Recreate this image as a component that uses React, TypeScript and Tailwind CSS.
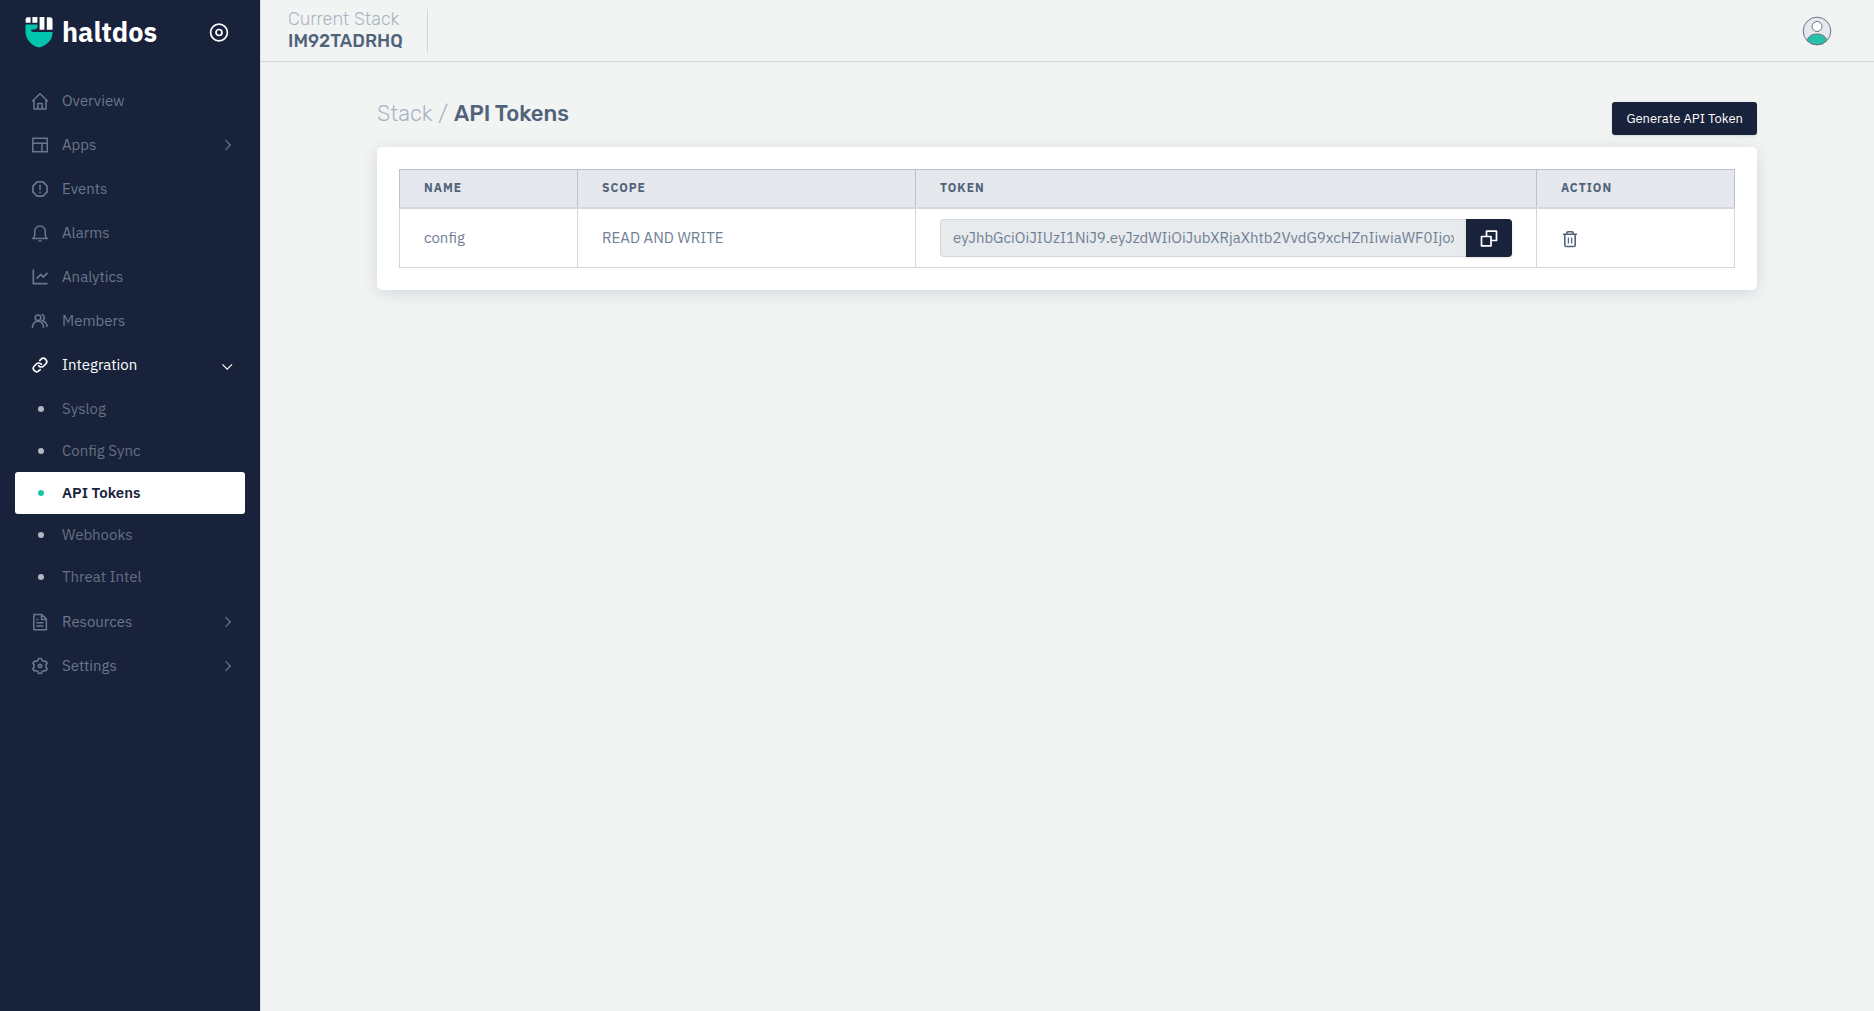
import React, { useState } from 'react';
import { Link } from 'lucide-react';
import { RiLineChartLine, RiSettings3Line, RiSpam2Line } from 'react-icons/ri';

interface NavItem {
  label: string;
  icon: React.ReactNode;
  children?: string[];
}

interface ApiToken {
  name: string;
  scope: string;
  token: string;
}

const HomeIcon = () => (
  <svg className="w-5 h-5" viewBox="0 0 20 20" fill="none" stroke="currentColor" strokeWidth="1.5" strokeLinejoin="round" strokeLinecap="round">
    <path d="M2.5 10 10 2.8l7.5 7.2M4 9v9h12V9M7.8 18v-5.5h4.4V18" />
  </svg>
);

const AppsIcon = () => (
  <svg className="w-5 h-5" viewBox="0 0 20 20" fill="none" stroke="currentColor" strokeWidth="1.5" strokeLinejoin="round">
    <path d="M2.8 3.3h14.5v13.4H2.8zM2.8 8.2h14.5M11.9 8.2v8.5" />
  </svg>
);

const BellIcon = () => (
  <svg className="w-5 h-5" viewBox="0 0 20 20" fill="none" stroke="currentColor" strokeWidth="1.5" strokeLinejoin="round" strokeLinecap="round">
    <path d="M2.8 15.5c1.2-.8 1.9-1.8 1.9-3.5V8.3a5.3 5.3 0 0 1 10.6 0V12c0 1.7.7 2.7 1.9 3.5zM9 18h2" />
  </svg>
);

const MembersIcon = () => (
  <svg className="w-5 h-5" viewBox="0 0 20 20" fill="none" stroke="currentColor" strokeWidth="1.6" strokeLinecap="round">
    <circle cx="8" cy="6.8" r="2.8" />
    <path d="M2.5 16.5v-.7a5.5 5.5 0 0 1 11 0v.7M12.2 3.5c2.7 1 2.7 5 .3 6.2 2.7.9 4.4 3 4.6 5.8" />
  </svg>
);

const FileIcon = () => (
  <svg className="w-5 h-5" viewBox="0 0 20 20" fill="none" stroke="currentColor" strokeWidth="1.5" strokeLinejoin="round">
    <path d="M3.8 2.5h8l4.6 4.6v10.6H3.8zM11.5 2.5v4.9h4.9M6.5 7.5h2M6.5 10.8h7M6.5 14h7" />
  </svg>
);

const CopyIcon = () => (
  <svg className="w-5 h-5" viewBox="0 0 20 20" fill="none" stroke="currentColor" strokeWidth="1.7" strokeLinejoin="round">
    <path d="M2.5 8.5H12v9.3H2.5zM7.5 8.5V3.2h10v9.3H12" />
  </svg>
);

const TrashIcon = () => (
  <svg className="w-[18px] h-[18px]" viewBox="0 0 18 18" fill="none" stroke="currentColor" strokeWidth="1.6" strokeLinejoin="round">
    <path d="M2 4.3h14M3.8 4.3v10.9q0 1.3 1.3 1.3h7.8q1.3 0 1.3-1.3V4.3M5.8 4.3V3q0-1.200 1.200-1.200h4q1.200 0 1.200 1.200v1.300" />
    <path d="M7.4 7.5v6M10.6 7.5v6" strokeWidth="1.3" />
  </svg>
);

const Logo = () => (
  <svg className="w-7 h-[31px]" viewBox="0 0 28 31">
    <path fill="#fff" d="M2.5.3H5.6v5.4H.8l-.3-3.2Q.6.3 2.5.3zM7.4.1h5v5.6h-5zM14.6.1h4.8v12.6h-4.8zM21.8.3h3.2Q27.5.4 27.5 3v9.7h-5.7z" />
    <path fill="#00c4ab" d="M.5 7.6h12v2q0 3-3.5 3H6.2v1.7q.8.7 2 .7h19.3v.8c0 7.5-6 13-13.5 14.7C6.5 28.8.5 22.3.5 15z" />
  </svg>
);

const ChevronIcon = ({ open }: { open: boolean }) => (
  <svg className="w-3 h-3" viewBox="0 0 12 12" fill="none" stroke="currentColor" strokeWidth="1.2">
    {open ? <path d="M.4 5.4l4.8 4.8L10 5.4" /> : <path d="M3.5 1.2 8.3 6l-4.8 4.8" />}
  </svg>
);

const navItems: NavItem[] = [
  { label: 'Overview', icon: <HomeIcon /> },
  { label: 'Apps', icon: <AppsIcon />, children: [] },
  { label: 'Events', icon: <RiSpam2Line size={20} /> },
  { label: 'Alarms', icon: <BellIcon /> },
  { label: 'Analytics', icon: <RiLineChartLine size={20} /> },
  { label: 'Members', icon: <MembersIcon /> },
  {
    label: 'Integration',
    icon: <Link size={16} strokeWidth={2.5} />,
    children: ['Syslog', 'Config Sync', 'API Tokens', 'Webhooks', 'Threat Intel'],
  },
  { label: 'Resources', icon: <FileIcon />, children: [] },
  { label: 'Settings', icon: <RiSettings3Line size={20} />, children: [] },
];

const tokens: ApiToken[] = [
  {
    name: 'config',
    scope: 'READ AND WRITE',
    token: 'eyJhbGciOiJIUzI1NiJ9.eyJzdWIiOiJubXRjaXhtb2VvdG9xcHZnIiwiaWF0IjoxNjk',
  },
];

const Sidebar: React.FC = () => {
  const [openMenu, setOpenMenu] = useState('Integration');
  const activePage = 'API Tokens';

  return (
    <aside className="w-[260px] shrink-0 bg-[#18223a] shadow-[1px_0_0_#dbdfea]">
      <div className="flex items-center justify-between h-16 pl-[25px] pr-[31px]">
        <a href="#" className="flex items-center gap-[9px] text-white">
          <Logo />
          <span className="text-[27px] leading-8 font-bold">haltdos</span>
        </a>
        <button type="button" aria-label="Toggle sidebar" className="text-white">
          <svg className="w-5 h-5" viewBox="0 0 20 20" fill="none" stroke="currentColor" strokeWidth="1.7">
            <circle cx="10" cy="10.5" r="8.4" />
            <circle cx="10" cy="10.5" r="3" />
          </svg>
        </button>
      </div>

      <nav className="pt-[15px] text-[15px] leading-5">
        <ul>
          {navItems.map((item) => {
            const isOpen = openMenu === item.label;
            return (
              <li key={item.label}>
                <a
                  href="#"
                  onClick={() => item.children && setOpenMenu(isOpen ? '' : item.label)}
                  className={`flex items-center h-11 pl-[30px] pr-[26px] ${isOpen ? 'text-white' : 'text-[#68778b] hover:text-white'}`}
                >
                  <span className="flex items-center justify-center w-5 mr-3">{item.icon}</span>
                  <span className="flex-1">{item.label}</span>
                  {item.children && <ChevronIcon open={isOpen} />}
                </a>
                {isOpen && item.children && (
                  <ul className="px-[15px] pt-px pb-0.5">
                    {item.children.map((child) => {
                      const isActive = child === activePage;
                      return (
                        <li key={child}>
                          <a
                            href="#"
                            className={`flex items-center h-[42px] pl-[23px] rounded-[3px] ${
                              isActive ? 'bg-white text-[#18223a] font-semibold' : 'text-[#647083] hover:text-white'
                            }`}
                          >
                            <span className={`w-1.5 h-1.5 mr-[18px] rounded-full ${isActive ? 'bg-[#1ec2a4]' : 'bg-[#b0b7c3]'}`} />
                            {child}
                          </a>
                        </li>
                      );
                    })}
                  </ul>
                )}
              </li>
            );
          })}
        </ul>
      </nav>
    </aside>
  );
};

const Header: React.FC = () => (
  <header className="flex items-center justify-between h-[62px] pl-7 pr-[42px] border-b border-[#d3d7dc]">
    <div className="flex flex-col gap-px h-11 pr-6 border-r border-[#d3d7dc] font-['Rubik','Roboto',sans-serif] text-lg leading-[21px]">
      <div className="font-light text-[#a9b4c2]">Current Stack</div>
      <div className="font-medium text-[#51637b]">IM92TADRHQ</div>
    </div>
    <button type="button" aria-label="Account">
      <svg className="w-[30px] h-[30px]" viewBox="0 0 30 30" stroke="#6b7488" strokeWidth="1">
        <circle cx="15" cy="15" r="13.8" fill="#e5e9ee" />
        <path d="M5.3 24.8C5.8 20.5 9.8 18 15 18s9.2 2.5 9.7 6.8Q21 28.8 15 28.8t-9.7-4z" fill="#26c1a6" />
        <circle cx="15" cy="10.5" r="5" fill="#fff" />
      </svg>
    </button>
  </header>
);

const TokenTable: React.FC = () => (
  <table className="w-full border-collapse text-left">
    <thead>
      <tr className="h-[38px] bg-[#e5e8ed] text-xs leading-4 font-bold uppercase tracking-[1px] text-[#51637b]">
        <th scope="col" className="w-[178px] px-6 border border-b-2 border-[#bcc2cd] border-b-[#d5d9df]">Name</th>
        <th scope="col" className="w-[338px] px-6 border border-b-2 border-[#bcc2cd] border-b-[#d5d9df]">Scope</th>
        <th scope="col" className="px-6 border border-b-2 border-[#bcc2cd] border-b-[#d5d9df]">Token</th>
        <th scope="col" className="w-[198px] px-6 border border-b-2 border-[#bcc2cd] border-b-[#d5d9df]">Action</th>
      </tr>
    </thead>
    <tbody>
      {tokens.map((item) => (
        <tr key={item.name} className="h-[60px] text-[15px] leading-5 text-[#718094]">
          <td className="px-6 border border-[#d3d7dd]">{item.name}</td>
          <td className="px-6 border border-[#d3d7dd]">{item.scope}</td>
          <td className="px-6 border border-[#d3d7dd]">
            <div className="flex">
              <input
                type="text"
                readOnly
                aria-label={`Token ${item.name}`}
                value={item.token}
                className="flex-1 min-w-0 h-[38px] px-3 rounded-l-[4px] border border-r-0 border-[#d3d7dd] bg-[#e8ebee]"
              />
              <button
                type="button"
                aria-label="Copy token"
                onClick={() => navigator.clipboard.writeText(item.token)}
                className="flex items-center justify-center w-[46px] h-[38px] rounded-r-[4px] bg-[#18223a] text-white shadow"
              >
                <CopyIcon />
              </button>
            </div>
          </td>
          <td className="px-6 border border-[#d3d7dd]">
            <button type="button" aria-label="Delete token" className="flex pt-0.5 text-[#51637b]">
              <TrashIcon />
            </button>
          </td>
        </tr>
      ))}
    </tbody>
  </table>
);

export default function App() {
  return (
    <div className="flex min-h-screen bg-[#f2f4f4] font-['IBM_Plex_Sans','Noto_Sans',sans-serif]">
      <Sidebar />
      <div className="flex-1 min-w-0">
        <Header />
        <main className="px-8 pt-10">
          <div className="max-w-[1380px] mx-auto">
            <div className="flex items-end justify-between mb-3">
              <h1 className="flex gap-1.5 self-start font-['Rubik','Roboto',sans-serif] text-[22px] leading-6 font-medium text-[#51637b]">
                <span className="font-light text-[#a9b4c2]">Stack /</span>
                <span>API Tokens</span>
              </h1>
              <button
                type="button"
                className="h-[33px] px-3.5 rounded-[3px] bg-[#18223a] text-[13px] leading-5 text-white shadow"
              >
                Generate API Token
              </button>
            </div>
            <section className="p-[22px] rounded-[5px] bg-white shadow-[0_3px_16px_rgba(30,45,80,0.14)]">
              <TokenTable />
            </section>
          </div>
        </main>
      </div>
    </div>
  );
}
